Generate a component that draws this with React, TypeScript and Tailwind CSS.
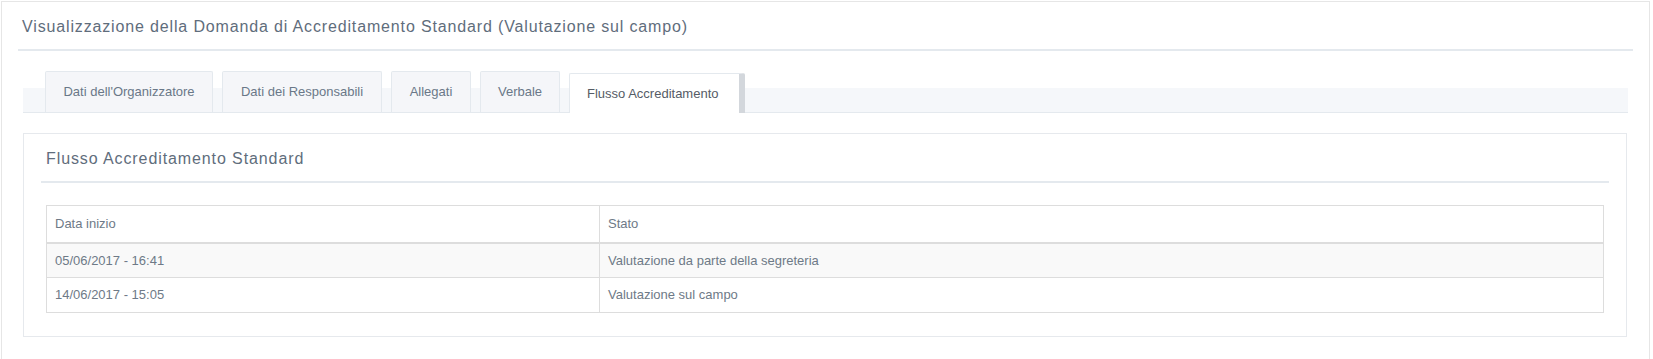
import React from 'react';

const tabs = [
  { label: "Dati dell'Organizzatore", w: 'w-[168px]', active: false },
  { label: 'Dati dei Responsabili', w: 'w-[160px]', active: false },
  { label: 'Allegati', w: 'w-[80px]', active: false },
  { label: 'Verbale', w: 'w-[80px]', active: false },
  { label: 'Flusso Accreditamento', w: 'w-[176px]', active: true },
];

const rows = [
  { data: '05/06/2017 - 16:41', stato: 'Valutazione da parte della segreteria' },
  { data: '14/06/2017 - 15:05', stato: 'Valutazione sul campo' },
];

export default function App() {
  return (
    <div className="h-[359px] w-full overflow-hidden bg-white font-['Liberation_Sans',Arial,sans-serif]">
      <div className="ml-[1px] mt-[1px] h-[400px] w-[1649px] border border-b-0 border-[#e6e6e6] bg-white">
        {/* Intestazione */}
        <div className="mx-[16px] border-b-2 border-[#e4e9ee] pb-[10px] pt-[13px]">
          <h1 className="pl-[4px] text-[16px] leading-[24px] tracking-[0.85px] text-[#5f6d7c]">
            Visualizzazione della Domanda di Accreditamento Standard (Valutazione sul campo)
          </h1>
        </div>

        <div className="px-[21px] pt-[20px]">
          {/* Tab */}
          <div className="flex h-[42px] items-start gap-[9px] border-b border-[#e4e9ee] bg-[linear-gradient(to_bottom,transparent_17px,#f5f7fa_17px)] pl-[22px]">
            {tabs.map((t) =>
              t.active ? (
                <div
                  key={t.label}
                  className={`${t.w} mt-[2px] flex h-[40px] items-center rounded-t-[2px] border border-b-0 border-r-[6px] border-[#e4e9ee] border-r-[#d3d7dc] bg-white pl-[17px] text-[13px] text-[#555c66]`}
                >
                  {t.label}
                </div>
              ) : (
                <div
                  key={t.label}
                  className={`${t.w} flex h-[41px] items-center justify-center rounded-t-[2px] border border-b-0 border-[#e4e9ee] bg-[#f5f6f9] text-[13px] text-[#6a7888]`}
                >
                  {t.label}
                </div>
              )
            )}
          </div>

          {/* Pannello */}
          <div className="mt-[20px] w-[1604px] border border-[#e6e9ed] px-[17px] pb-[23px] pt-[13px]">
            <div className="border-b-2 border-[#e4e9ee] pb-[10px]">
              <h2 className="pl-[5px] text-[16px] leading-[24px] tracking-[0.9px] text-[#5f6d7c]">
                Flusso Accreditamento Standard
              </h2>
            </div>

            <div className="mx-[5px] mt-[22px]">
              <table className="w-full border-collapse text-[13px] text-[#6e7a87]">
                <thead>
                  <tr className="h-[37px]">
                    <th className="w-[553px] border border-b-2 border-[#dddddd] px-[8px] text-left font-normal">Data inizio</th>
                    <th className="border border-b-2 border-[#dddddd] px-[8px] text-left font-normal">Stato</th>
                  </tr>
                </thead>
                <tbody>
                  {rows.map((r, i) => (
                    <tr key={r.data} className={i % 2 === 0 ? 'h-[35px] bg-[#f9f9f9]' : 'h-[35px] bg-white'}>
                      <td className="border border-[#dddddd] px-[8px]">{r.data}</td>
                      <td className="border border-[#dddddd] px-[8px]">{r.stato}</td>
                    </tr>
                  ))}
                </tbody>
              </table>
            </div>
          </div>
        </div>
      </div>
    </div>
  );
}
